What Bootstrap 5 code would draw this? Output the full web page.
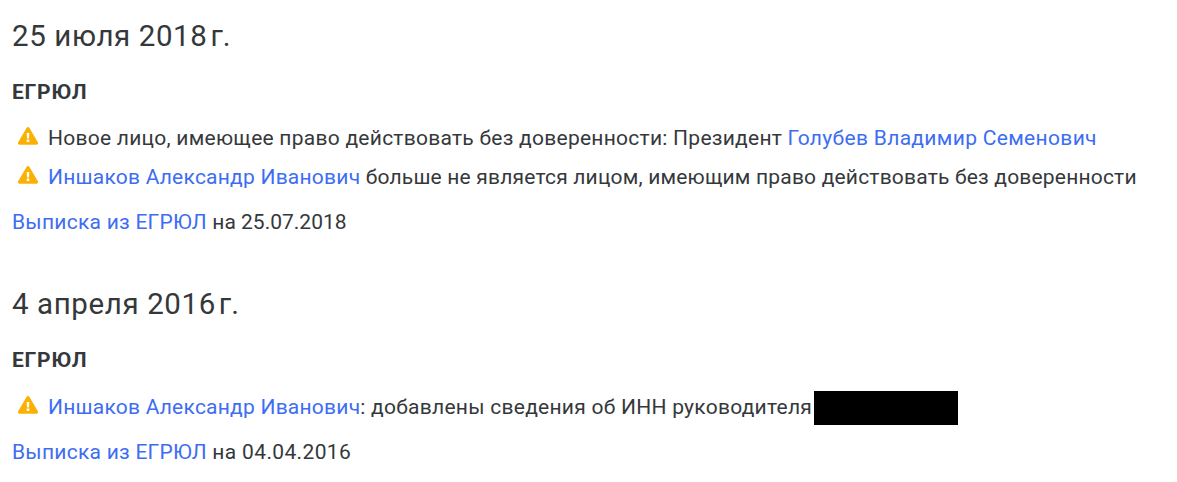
<!DOCTYPE html>
<html lang="ru">
<head>
    <meta charset="UTF-8">
    <meta name="viewport" content="width=device-width, initial-scale=1.0">
    <title>История изменений</title>
    <link href="https://cdn.jsdelivr.net/npm/bootstrap@5.3.3/dist/css/bootstrap.min.css" rel="stylesheet">
    <style>
        body {
            font-family: Roboto, "Liberation Sans", sans-serif;
            font-size: 21px;
            line-height: 28px;
            letter-spacing: .19px;
            color: #35383b;
            background: #fff;
        }
        a { color: #3d6df2; text-decoration: none; }
        a:hover { text-decoration: underline; }
        .history { padding: 18px 12px 0; }
        .event + .event { margin-top: 50px; }
        .event-date {
            font-size: 29.5px;
            font-weight: 400;
            line-height: 36px;
            letter-spacing: .6px;
            margin-bottom: 24px;
        }
        .event-date .year-mark { margin-left: 3px; letter-spacing: 0; }
        .event-source {
            font-size: 21px;
            font-weight: 700;
            line-height: 28px;
            letter-spacing: .8px;
            margin-bottom: 18px;
        }
        .event + .event .event-source { margin-bottom: 19px; }
        .event-list { gap: 11px; margin-bottom: 17px; }
        .event-list li { padding-left: 6px; }
        .event-list a { letter-spacing: .225px; }
        .warn-icon { width: 20px; height: 18px; margin: 3px 10px 0 0; }
        .event-list .person-wide { letter-spacing: .32px; }
        .text-wide { letter-spacing: .255px; }
        .date-tight { letter-spacing: 0; }
        .date-wide { letter-spacing: .35px; }
        .redacted { width: 144px; height: 34px; margin: -2px 0 -4px 1.5px; background: #000; }
    </style>
</head>
<body>
    <!-- Иконка предупреждения -->
    <svg class="d-none">
        <symbol id="warn" viewBox="0 0 20 18">
            <path fill="#fbb104" d="M8.500.9a1.750 1.750 0 0 1 3 0l8.300 14.400c.6 1.100 0 2.400-1.300 2.400h-17C.2 17.700-.4 16.400.2 15.300z"/>
            <path fill="#fff" d="M8.700 6h2.600l-.3 5.600H9zM8.700 12.600h2.600v2.400H8.700z"/>
        </symbol>
    </svg>

    <main class="history text-nowrap">
        <section class="event">
            <h2 class="event-date">25 июля 2018<span class="year-mark">г.</span></h2>
            <h3 class="event-source">ЕГРЮЛ</h3>
            <ul class="event-list list-unstyled d-flex flex-column">
                <li class="d-flex align-items-start">
                    <svg class="warn-icon flex-shrink-0"><use href="#warn"/></svg>
                    <div class="text-wide">Новое лицо, имеющее право действовать без доверенности: Президент <a href="#" class="person-wide">Голубев Владимир Семенович</a></div>
                </li>
                <li class="d-flex align-items-start">
                    <svg class="warn-icon flex-shrink-0"><use href="#warn"/></svg>
                    <div><a href="#">Иншаков Александр Иванович</a> больше не является лицом, имеющим право действовать без доверенности</div>
                </li>
            </ul>
            <div><a href="#" class="text-wide">Выписка из ЕГРЮЛ</a> <span class="date-tight">на 25.07.2018</span></div>
        </section>

        <section class="event">
            <h2 class="event-date">4 апреля 2016<span class="year-mark">г.</span></h2>
            <h3 class="event-source">ЕГРЮЛ</h3>
            <ul class="event-list list-unstyled d-flex flex-column">
                <li class="d-flex align-items-start">
                    <svg class="warn-icon flex-shrink-0"><use href="#warn"/></svg>
                    <div><a href="#">Иншаков Александр Иванович</a><span class="text-wide">: добавлены сведения об ИНН руководителя</span></div>
                    <div class="redacted"></div>
                </li>
            </ul>
            <div><a href="#" class="text-wide">Выписка из ЕГРЮЛ</a> <span class="date-wide">на 04.04.2016</span></div>
        </section>
    </main>

    <script src="https://cdn.jsdelivr.net/npm/bootstrap@5.3.3/dist/js/bootstrap.bundle.min.js"></script>
</body>
</html>
